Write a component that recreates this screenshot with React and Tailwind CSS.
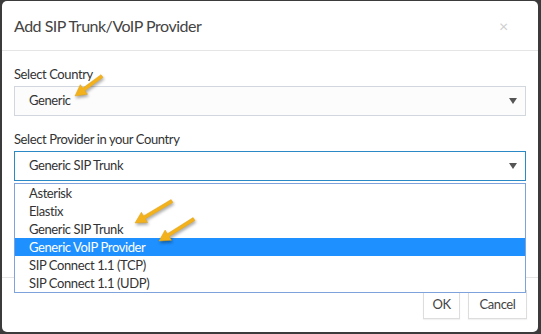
import React from "react";

const FONT = { fontFamily: "Lato, 'Noto Sans', sans-serif" };

function Arrow({ tail, tip }) {
  const dx = tip[0] - tail[0];
  const dy = tip[1] - tail[1];
  const len = Math.hypot(dx, dy);
  const ux = dx / len, uy = dy / len;
  const nx = -uy, ny = ux;
  const hl = 11, hw = 6, sw = 1.7;
  const bx = tip[0] - ux * hl, by = tip[1] - uy * hl;
  const pts = [
    [tail[0] + nx * sw, tail[1] + ny * sw],
    [bx + nx * sw, by + ny * sw],
    [bx + nx * hw, by + ny * hw],
    [tip[0], tip[1]],
    [bx - nx * hw, by - ny * hw],
    [bx - nx * sw, by - ny * sw],
    [tail[0] - nx * sw, tail[1] - ny * sw],
  ];
  return (
    <polygon
      points={pts.map((p) => p.join(",")).join(" ")}
      fill="#f3b21b"
      stroke="#e0a010"
      strokeWidth="0.5"
      strokeLinejoin="round"
    />
  );
}

function Caret() {
  return (
    <svg width="8" height="6" viewBox="0 0 8 6" className="shrink-0">
      <polygon points="0,0 8,0 4,6" fill="#555" />
    </svg>
  );
}

export default function App() {
  const items = [
    "Asterisk",
    "Elastix",
    "Generic SIP Trunk",
    "Generic VoIP Provider",
    "SIP Connect 1.1 (TCP)",
    "SIP Connect 1.1 (UDP)",
  ];
  return (
    <div
      className="relative w-[541px] h-[334px] bg-[#3b3b3b] pt-px pl-[2px] pr-[3px] pb-[2px] overflow-hidden tracking-[-0.4px]"
      style={FONT}
    >
      <div className="relative h-full bg-white rounded-[5px] flex flex-col">
        <div className="h-[50px] pl-[12px] pr-[30px] flex items-center justify-between border-b border-[#e5e5e5]">
          <span className="text-[16px] text-[#444] leading-none tracking-[-0.5px]">Add SIP Trunk/VoIP Provider</span>
          <span className="text-[16px] text-[#cfcfcf] leading-none">×</span>
        </div>
        <div className="px-[12px] pt-[14px] h-[226px] flex flex-col">
          <label className="h-[18px] text-[13px] leading-[18px] text-[#333] mb-[3px]">Select Country</label>
          <div className="h-[30px] border border-[#d2d6de] bg-[#fcfcfc] flex items-center justify-between pl-[14px] pr-[8px] text-[13px] text-[#333]">
            <span>Generic</span>
            <Caret />
          </div>
          <label className="mt-[14px] h-[18px] text-[13px] leading-[18px] text-[#333] mb-[3px]">Select Provider in your Country</label>
          <div className="h-[30px] border border-[#2b8ac6] bg-white flex items-center justify-between pl-[14px] pr-[8px] text-[13px] text-[#333]">
            <span>Generic SIP Trunk</span>
            <Caret />
          </div>
          <div className="mt-[14px] h-[18px] mb-[3px]" />
          <div className="h-[30px] border border-[#d2d6de] bg-white" />
        </div>
        <div className="flex-1 border-t border-[#e5e5e5] flex items-start justify-end gap-[8px] pt-[12px] pr-[11px]">
          <button className="h-[29px] w-[37px] border border-[#ddd] bg-white text-[13px] text-[#444] shadow-[0_1px_1px_rgba(0,0,0,0.05)]">OK</button>
          <button className="h-[29px] w-[59px] border border-[#ddd] bg-white text-[13px] text-[#444] shadow-[0_1px_1px_rgba(0,0,0,0.05)]">Cancel</button>
        </div>

        <div className="absolute left-[12px] top-[182px] w-[512px] border border-[#7ea3dc] bg-white">
          {items.map((it) => (
            <div
              key={it}
              className={
                it === "Generic VoIP Provider"
                  ? "h-[18px] leading-[18px] pl-[14px] text-[13px] bg-[#1e90ff] text-white"
                  : "h-[18px] leading-[18px] pl-[14px] text-[13px] text-[#333]"
              }
            >
              {it}
            </div>
          ))}
        </div>
      </div>

      <svg
        className="absolute left-0 top-0 pointer-events-none"
        width="541"
        height="334"
        style={{ filter: "drop-shadow(1px 2px 1.5px rgba(0,0,0,0.35))" }}
      >
        <Arrow tail={[102, 76]} tip={[75, 96]} />
        <Arrow tail={[172, 201]} tip={[135, 223]} />
        <Arrow tail={[194, 219]} tip={[159, 241]} />
      </svg>
    </div>
  );
}
